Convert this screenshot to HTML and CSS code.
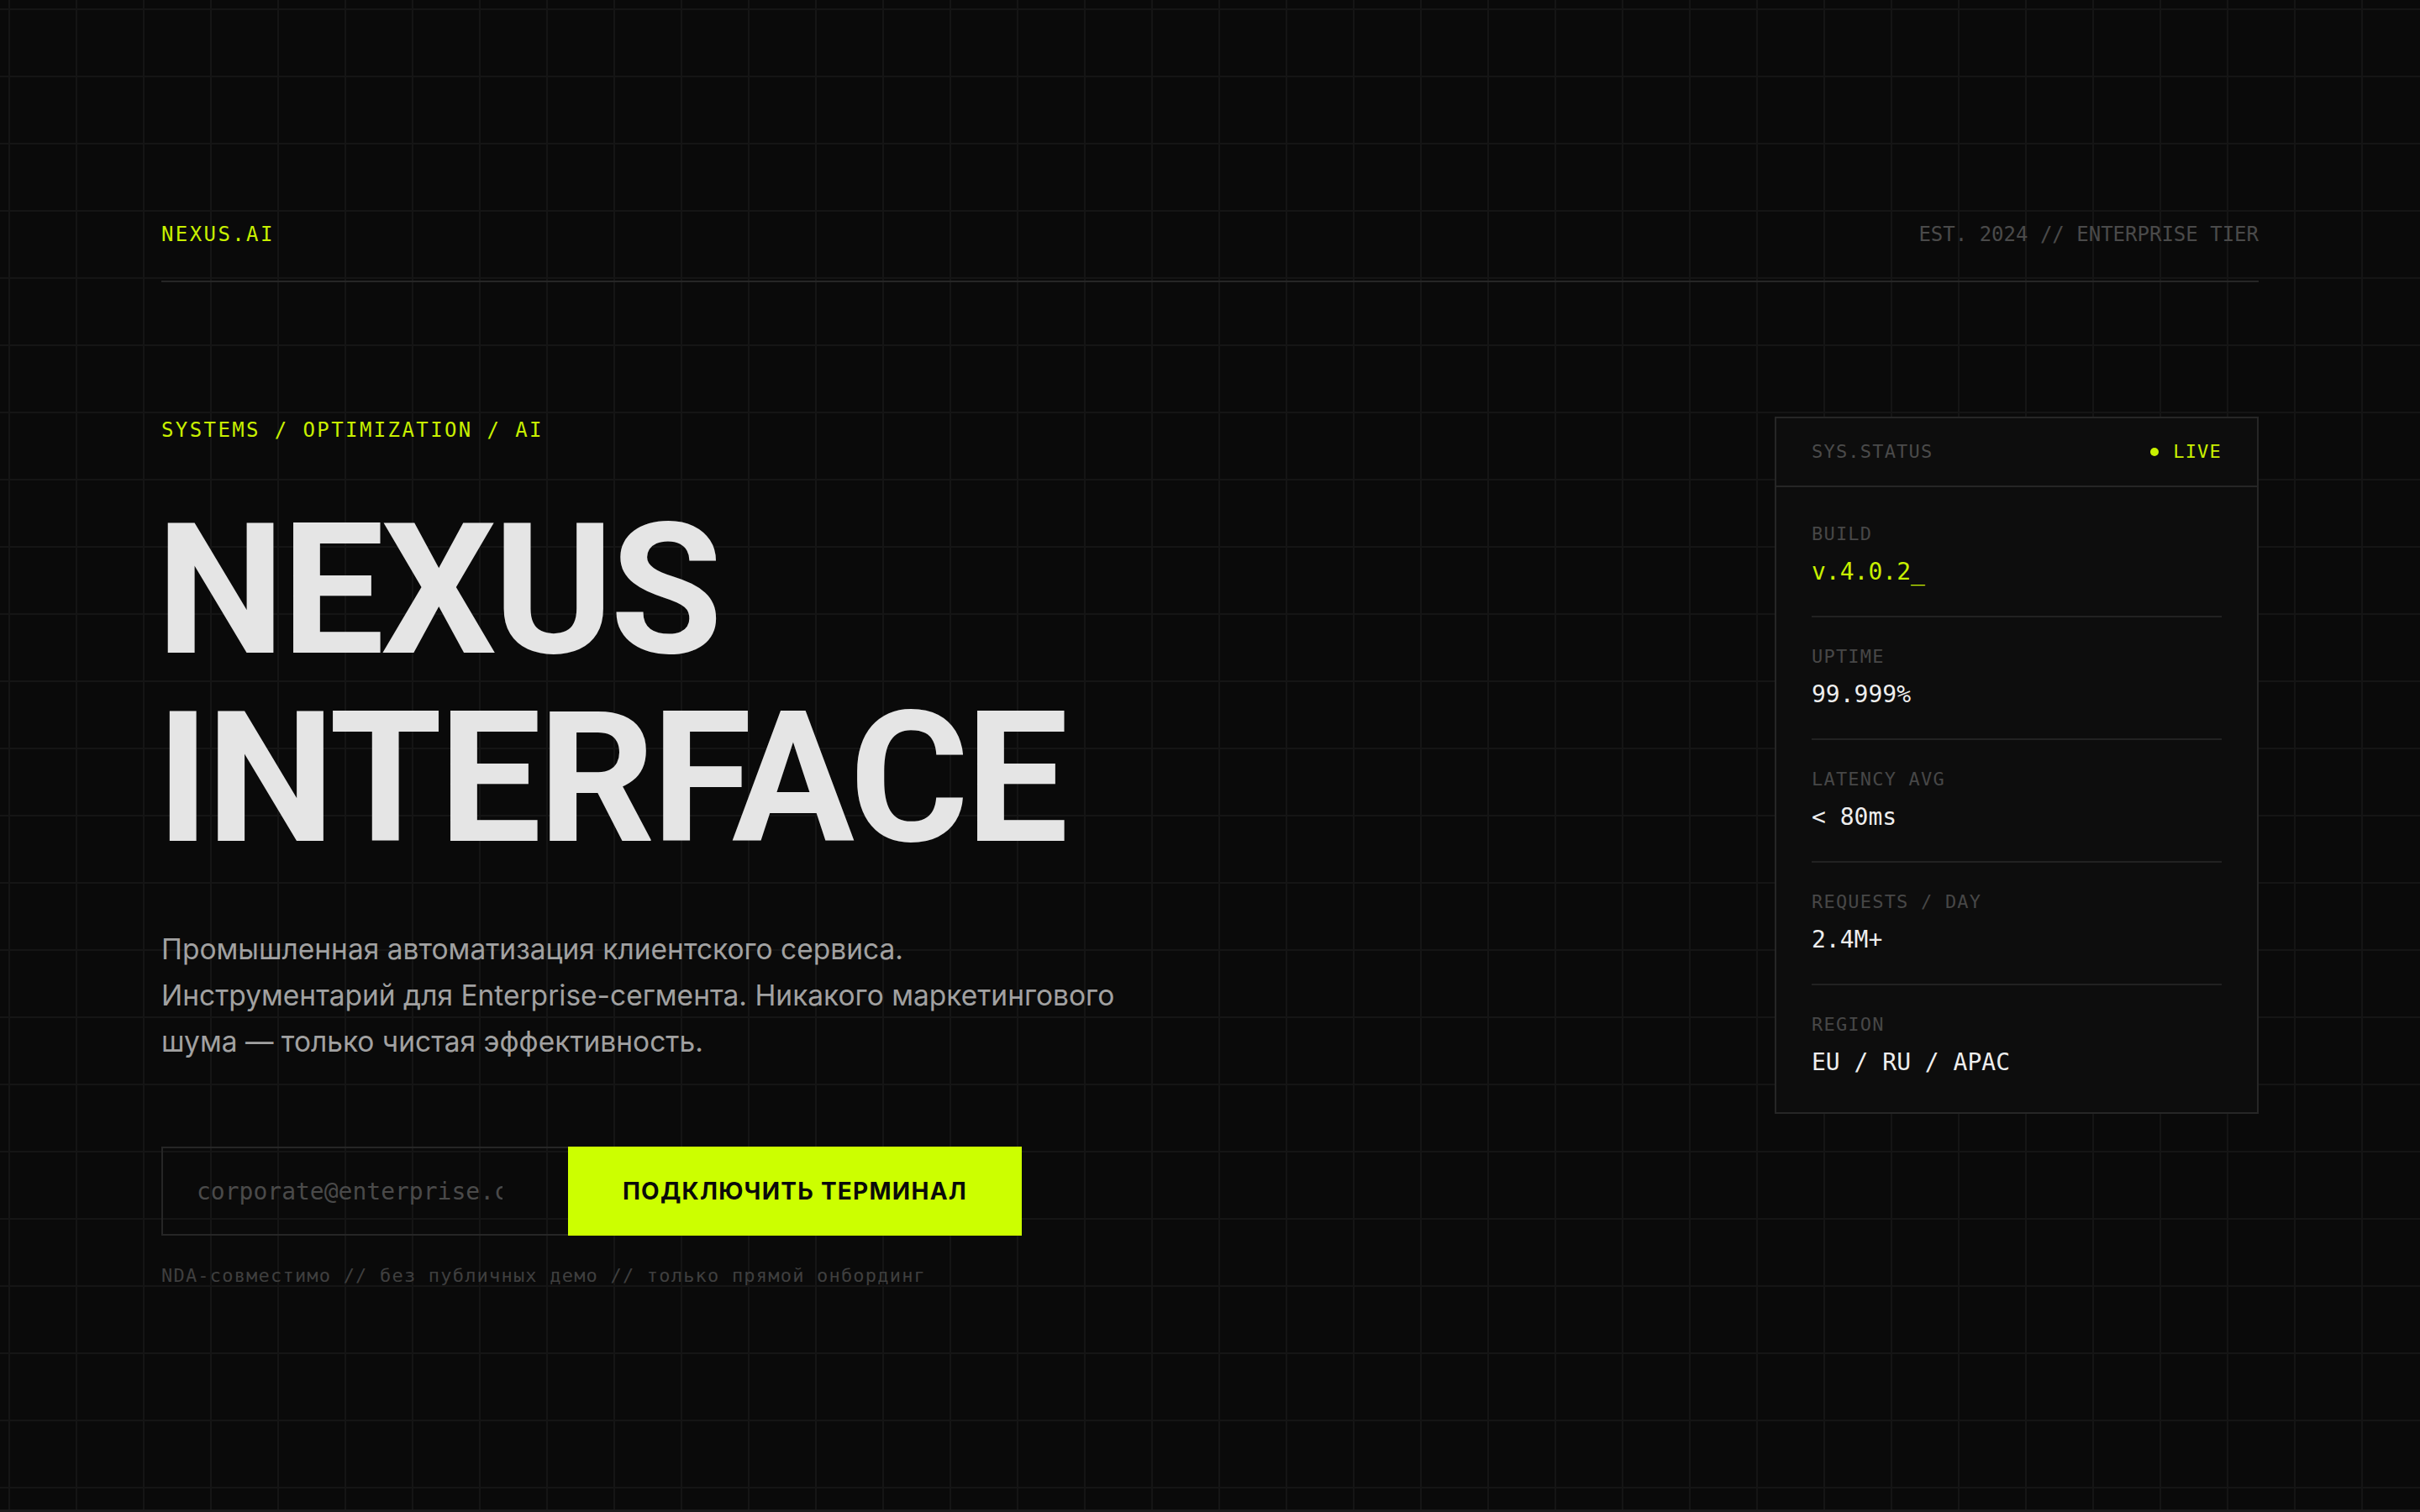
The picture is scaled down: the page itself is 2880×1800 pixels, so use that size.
FILE: index.html
```html
<!DOCTYPE html>
<html lang="ru">
<head>
<meta charset="utf-8">
<title>NEXUS.AI</title>
<link rel="stylesheet" href="styles.css">
</head>
<body>
<div class="page">
  <header class="topbar">
    <span class="brand">NEXUS.AI</span>
    <span class="meta">EST. 2024 // ENTERPRISE TIER</span>
  </header>
  <main class="hero">
    <section class="intro">
      <p class="eyebrow">SYSTEMS / OPTIMIZATION / AI</p>
      <h1 class="title"><span class="title-line">NEXUS</span><span class="title-line">INTERFACE</span></h1>
      <p class="lead">Промышленная автоматизация клиентского сервиса.<br>Инструментарий для Enterprise-сегмента. Никакого маркетингового шума — только чистая эффективность.</p>
      <form class="signup">
        <input class="email" type="email" placeholder="corporate@enterprise.com">
        <button class="cta" type="button">ПОДКЛЮЧИТЬ ТЕРМИНАЛ</button>
      </form>
      <p class="note">NDA-совместимо // без публичных демо // только прямой онбординг</p>
    </section>
    <aside class="status">
      <div class="status-head">
        <span class="status-title">SYS.STATUS</span>
        <span class="live"><span class="dot"></span>LIVE</span>
      </div>
      <dl class="status-body">
        <div class="stat"><dt>BUILD</dt><dd class="accent">v.4.0.2_</dd></div>
        <div class="stat"><dt>UPTIME</dt><dd>99.999%</dd></div>
        <div class="stat"><dt>LATENCY AVG</dt><dd>&lt; 80ms</dd></div>
        <div class="stat"><dt>REQUESTS / DAY</dt><dd>2.4M+</dd></div>
        <div class="stat"><dt>REGION</dt><dd>EU / RU / APAC</dd></div>
      </dl>
    </aside>
  </main>
</div>
<footer class="edge"></footer>
</body>
</html>
```
FILE: styles.css
```css
html, body {
  margin: 0;
  padding: 0;
}
body {
  background-color: #0a0a0a;
  background-image:
    linear-gradient(to right, #151515 2px, transparent 2px),
    linear-gradient(to bottom, #151515 2px, transparent 2px);
  background-size: 80px 80px;
  background-position: 10px 10px;
  color: #e5e5e5;
  font-family: "Inter", "Noto Sans", sans-serif;
}
.page {
  height: 1797px;
  box-sizing: border-box;
  padding: 261px 192px 0;
}
.topbar {
  display: flex;
  justify-content: space-between;
  align-items: center;
  padding-bottom: 37px;
  border-bottom: 2px solid #262626;
  font-family: "DejaVu Sans Mono", "Liberation Mono", monospace;
  font-size: 24px;
  line-height: 36px;
}
.brand {
  color: #c8f000;
  letter-spacing: 2.4px;
}
.meta {
  color: #4a4a4a;
}
.hero {
  display: grid;
  grid-template-columns: 1fr 576px;
  align-items: start;
  margin-top: 160px;
}
.eyebrow {
  margin: 0;
  font-family: "DejaVu Sans Mono", "Liberation Mono", monospace;
  font-size: 24px;
  line-height: 32px;
  letter-spacing: 2.4px;
  color: #c8f000;
}
.title {
  display: flex;
  flex-direction: column;
  margin: 63px 0 0 -6px;
  font-family: "Roboto", "Inter", sans-serif;
  font-weight: 700;
  font-size: 217px;
  line-height: 224px;
  letter-spacing: -0.018em;
  color: #e5e5e5;
}
.title-line {
  display: block;
  height: 224px;
}
.lead {
  margin: 64px 0 0;
  max-width: 1160px;
  font-size: 33.5px;
  line-height: 55px;
  color: #a1a1a1;
}
.signup {
  display: flex;
  margin-top: 97px;
}
.email {
  box-sizing: border-box;
  width: 484px;
  height: 106px;
  margin: 0;
  padding: 0 78px 0 40px;
  background: transparent;
  border: 2px solid #262626;
  border-right: none;
  outline: none;
  font-family: "DejaVu Sans Mono", "Liberation Mono", monospace;
  font-size: 28px;
  color: #e5e5e5;
}
.email::placeholder {
  color: #4a4a4a;
}
.cta {
  box-sizing: border-box;
  width: 540px;
  height: 106px;
  margin: 0;
  border: none;
  background: #ccff00;
  color: #0a0a0a;
  font-family: "Inter", sans-serif;
  font-weight: 700;
  font-size: 28px;
  letter-spacing: 0.045em;
}
.note {
  margin: 34px 0 0;
  font-family: "DejaVu Sans Mono", "Liberation Mono", monospace;
  font-size: 22px;
  line-height: 28px;
  letter-spacing: 1.2px;
  color: #3f3f3f;
}
.status {
  border: 2px solid #262626;
  background: #0d0d0d;
  font-family: "DejaVu Sans Mono", "Liberation Mono", monospace;
}
.status-head {
  display: flex;
  justify-content: space-between;
  align-items: center;
  padding: 26px 42px;
  border-bottom: 2px solid #262626;
  font-size: 22px;
  line-height: 28px;
  letter-spacing: 1.2px;
}
.status-title {
  color: #4a4a4a;
}
.live {
  display: flex;
  align-items: center;
  gap: 17px;
  color: #c8f000;
}
.dot {
  width: 10px;
  height: 10px;
  border-radius: 50%;
  background: #c8f000;
}
.status-body {
  margin: 0;
  padding: 9px 42px 7px;
}
.stat {
  padding: 33px 0 34px;
  border-bottom: 2px solid #222222;
}
.stat:last-child {
  border-bottom: none;
}
.stat dt {
  font-size: 22px;
  line-height: 28px;
  letter-spacing: 1.2px;
  color: #474747;
}
.stat dd {
  margin: 13px 0 0;
  font-size: 28px;
  line-height: 36px;
  color: #eeeeee;
}
.stat dd.accent {
  color: #c8f000;
}
.edge {
  height: 3px;
  background: #1c1c1c;
}
```
